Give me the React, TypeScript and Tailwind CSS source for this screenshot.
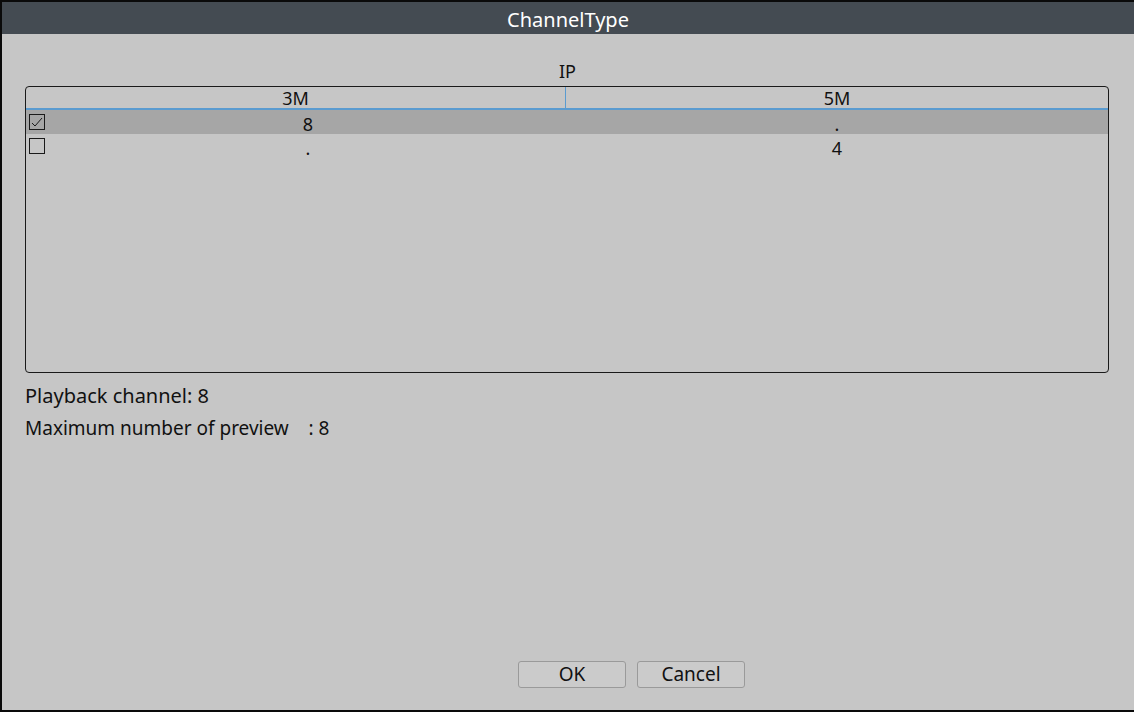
import React from "react";

function CheckBox({ checked }: { checked: boolean }) {
  return (
    <div className="w-[16px] h-[16px] border border-[#1a1a1a] flex items-center justify-center">
      {checked && (
        <svg width="14" height="14" viewBox="0 0 14 14">
          <path d="M2 8 L5 11 L12 3" fill="none" stroke="#1a1a1a" strokeWidth="1" />
        </svg>
      )}
    </div>
  );
}

export default function App() {
  const rows = [
    { checked: true, a: "8", b: "." },
    { checked: false, a: ".", b: "4" },
  ];
  return (
    <div
      className="w-[1134px] h-[712px] bg-[#0a0a0a] pt-[2px] pl-[2px] pb-[2px] flex flex-col overflow-hidden"
      style={{ fontFamily: '"Noto Sans", "Open Sans", sans-serif' }}
    >
      <div className="h-[32px] bg-[#444b52] text-white text-[20px] flex items-center justify-center leading-none pt-[3px]">
        ChannelType
      </div>
      <div className="flex-1 bg-[#c6c6c6] flex flex-col text-[#111] pl-[23px] pr-[24px]">
        <div className="h-[52px] flex items-end justify-center text-[18px] leading-none pb-[6px]">IP</div>
        <div className="h-[287px] w-[1084px] border-[1.5px] border-[#1a1a1a] rounded-[4px] flex flex-col">
          <div className="h-[23px] flex border-b-2 border-[#5a9bd0] text-[18px] leading-none">
            <div className="w-[540px] flex items-end justify-center pb-[1px] border-r border-[#5a9bd0]">3M</div>
            <div className="flex-1 flex items-end justify-center pb-[1px]">5M</div>
          </div>
          {rows.map((r, i) => (
            <div
              key={i}
              className={`h-[24px] flex items-center text-[18px] leading-none ${i === 0 ? "bg-[#a6a6a6]" : ""}`}
            >
              <div className="w-[24px] flex items-center justify-start pl-[3px]">
                <CheckBox checked={r.checked} />
              </div>
              <div className="w-[516px] text-center pt-[3px]">{r.a}</div>
              <div className="flex-1 text-center pt-[3px]">{r.b}</div>
            </div>
          ))}
        </div>
        <div className="mt-[12px] text-[20px] leading-none h-[22px] flex items-center">Playback channel: 8</div>
        <div className="mt-[10px] text-[19px] leading-none h-[22px] flex items-center whitespace-pre">
          Maximum number of preview    : 8
        </div>
        <div className="flex-1" />
        <div className="flex gap-[11px] mb-[22px] pl-[493px]">
          <button className="w-[108px] h-[27px] bg-[#cbcbcb] border border-[#9a9a9a] rounded-[3px] text-[19px] leading-none text-[#111]">
            OK
          </button>
          <button className="w-[108px] h-[27px] bg-[#cbcbcb] border border-[#9a9a9a] rounded-[3px] text-[19px] leading-none text-[#111]">
            Cancel
          </button>
        </div>
      </div>
    </div>
  );
}
